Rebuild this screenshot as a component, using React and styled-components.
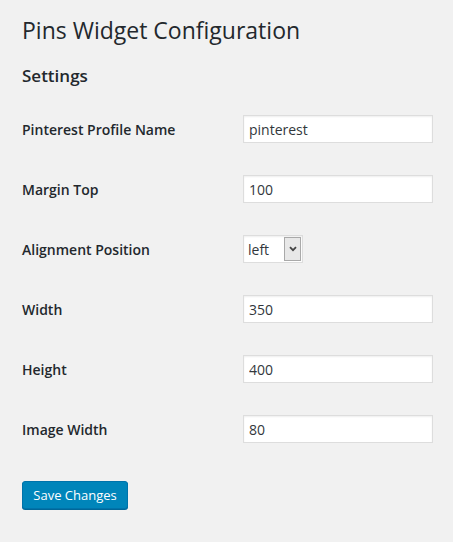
import React from "react";
import styled, { createGlobalStyle } from "styled-components";

const Global = createGlobalStyle`
  html, body { margin: 0; padding: 0; background: #f1f1f1; }
  body { font-family: "Open Sans", "Noto Sans", sans-serif; color: #444; }
`;

const Wrap = styled.div`
  padding: 16px 20px 20px 22px;
  width: 453px;
  box-sizing: border-box;
`;

const Title = styled.h2`
  margin: 0;
  font-size: 23px;
  font-weight: 400;
  line-height: 29px;
  color: #23282d;
`;

const Section = styled.h3`
  margin: 19px 0 11px;
  font-size: 17px;
  font-weight: 600;
  line-height: 24px;
  color: #23282d;
`;

const Form = styled.div`
  display: grid;
  grid-template-columns: 221px 190px;
  grid-auto-rows: 60px;
  align-items: center;
`;

const Label = styled.label`
  font-size: 14px;
  font-weight: 600;
  color: #23282d;
`;

const Input = styled.input`
  box-sizing: border-box;
  width: 190px;
  height: 28px;
  margin: 0;
  padding: 0 5px;
  border: 1px solid #ddd;
  box-shadow: inset 0 1px 2px rgba(0, 0, 0, 0.07);
  background: #fff;
  font-family: inherit;
  font-size: 14px;
  color: #32373c;
  outline: none;
`;

const Select = styled.div`
  box-sizing: border-box;
  width: 60px;
  height: 28px;
  display: flex;
  align-items: stretch;
  border: 1px solid #ddd;
  background: #fff;
  box-shadow: inset 0 1px 2px rgba(0, 0, 0, 0.07);
`;

const SelectText = styled.span`
  flex: 1;
  display: flex;
  align-items: center;
  padding-left: 4px;
  font-size: 14px;
  color: #32373c;
`;

const Arrow = styled.span`
  width: 15px;
  display: flex;
  align-items: center;
  justify-content: center;
  background: #e8e8e8;
  border: 1px solid #a9a9a9;
  margin: 1px 1px 1px 0;
`;

const Button = styled.button`
  margin-top: 22px;
  box-sizing: border-box;
  height: 28px;
  width: 106px;
  padding: 0 10px 1px;
  background: #0085ba;
  border: 1px solid #0073aa;
  border-radius: 3px;
  box-shadow: 0 1px 0 #006799;
  color: #fff;
  font-family: inherit;
  font-size: 13px;
  line-height: 26px;
  white-space: nowrap;
`;

const rows = [
  ["Pinterest Profile Name", "pinterest"],
  ["Margin Top", "100"],
  ["Alignment Position", null],
  ["Width", "350"],
  ["Height", "400"],
  ["Image Width", "80"],
];

export default function App() {
  return (
    <>
      <Global />
      <Wrap>
        <Title>Pins Widget Configuration</Title>
        <Section>Settings</Section>
        <Form>
          {rows.map(([label, value]) => (
            <React.Fragment key={label}>
              <Label>{label}</Label>
              {value === null ? (
                <Select>
                  <SelectText>left</SelectText>
                  <Arrow>
                    <svg width="8" height="6" viewBox="0 0 8 6">
                      <path d="M1 1.2 L4 4.2 L7 1.2" fill="none" stroke="#444" strokeWidth="1.8" />
                    </svg>
                  </Arrow>
                </Select>
              ) : (
                <Input defaultValue={value} />
              )}
            </React.Fragment>
          ))}
        </Form>
        <Button>Save Changes</Button>
      </Wrap>
    </>
  );
}
